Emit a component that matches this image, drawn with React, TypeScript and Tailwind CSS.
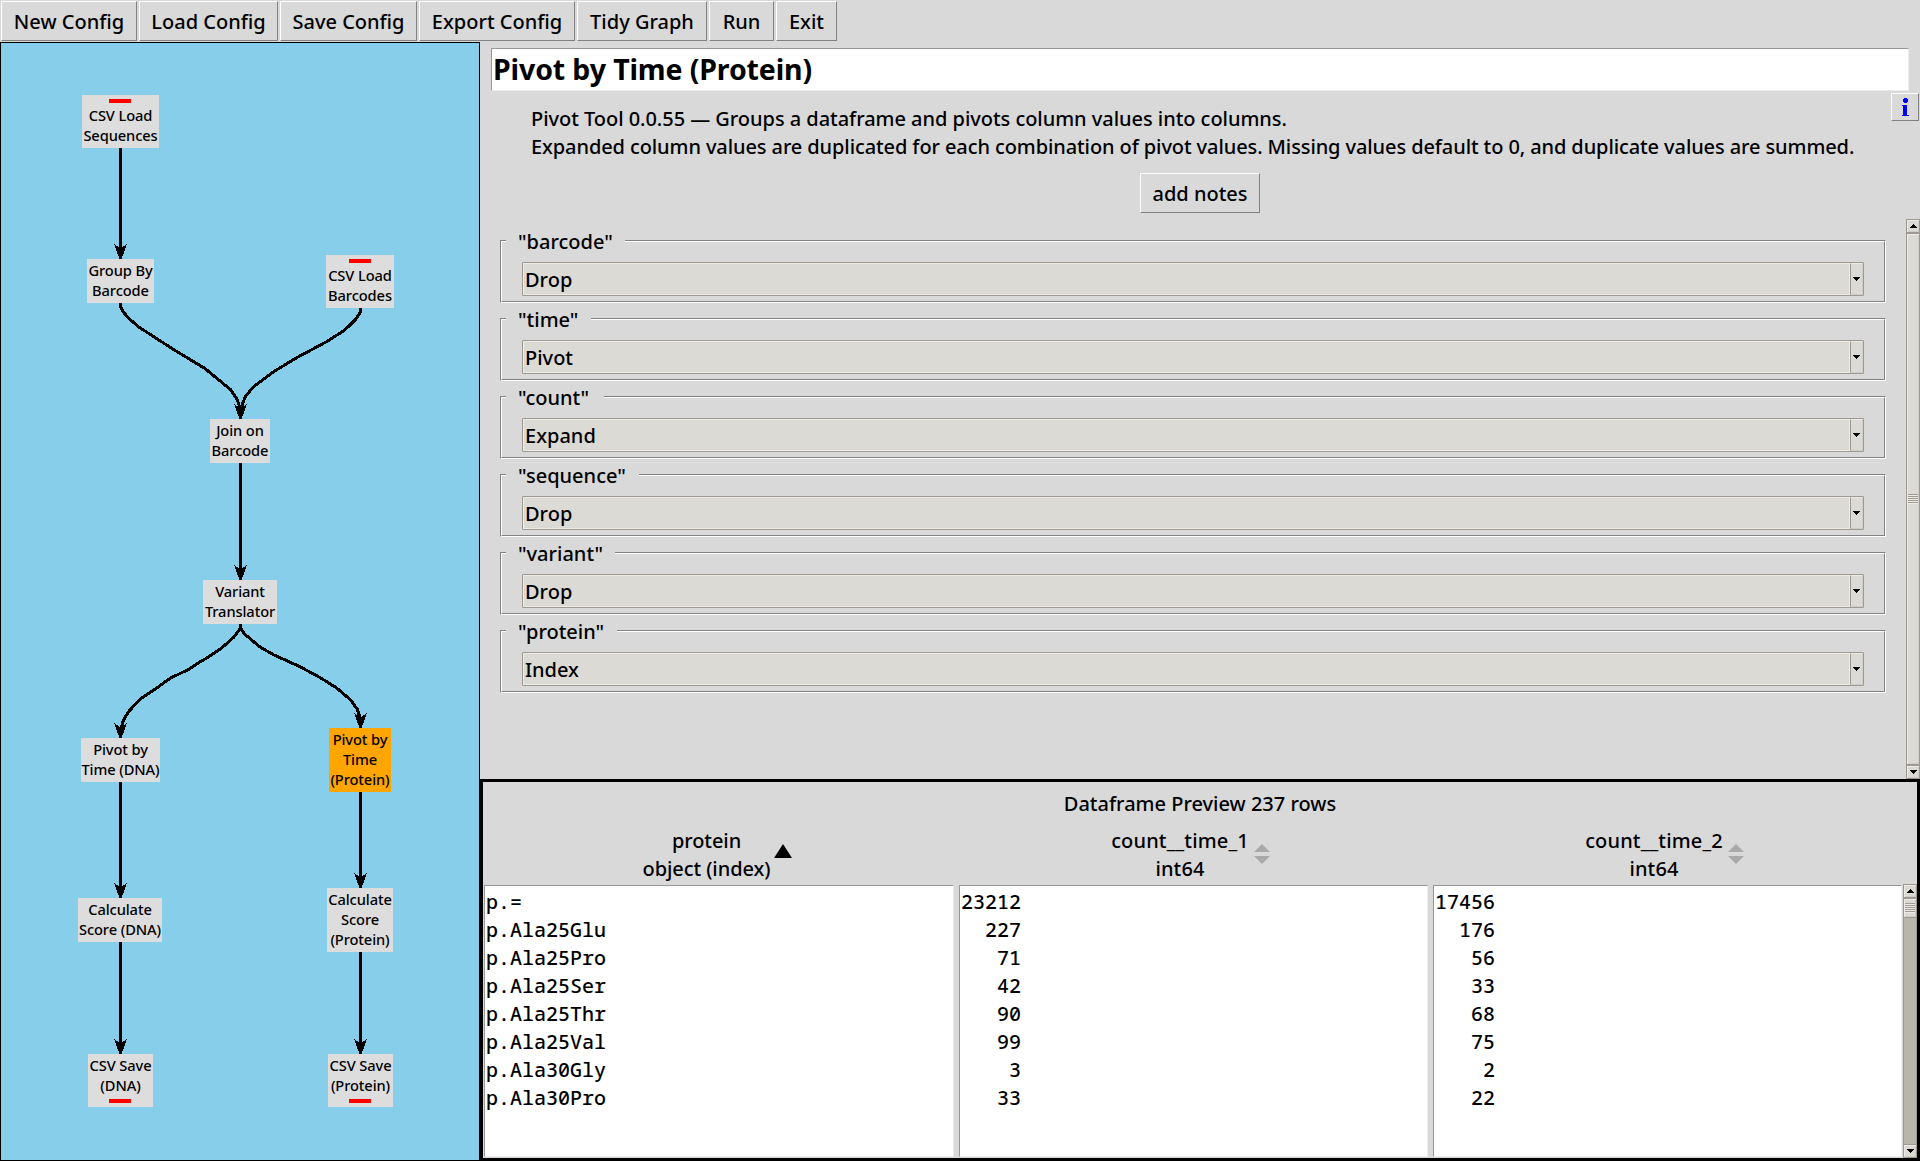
import type { ReactNode } from "react";

const TOOLBAR: { label: string; width: string }[] = [
  { label: "New Config", width: "w-[136px]" },
  { label: "Load Config", width: "w-[139px]" },
  { label: "Save Config", width: "w-[137px]" },
  { label: "Export Config", width: "w-[156px]" },
  { label: "Tidy Graph", width: "w-[130px]" },
  { label: "Run", width: "w-[65px]" },
  { label: "Exit", width: "w-[61px]" },
];

type GraphNode = {
  x: number;
  y: number;
  w: number;
  lines: string[];
  bar?: "top" | "bottom";
  selected?: boolean;
};

const NODES: GraphNode[] = [
  { x: 82, y: 95, w: 77, lines: ["CSV Load", "Sequences"], bar: "top" },
  { x: 87, y: 259, w: 67, lines: ["Group By", "Barcode"] },
  { x: 326, y: 255, w: 68, lines: ["CSV Load", "Barcodes"], bar: "top" },
  { x: 210, y: 419, w: 60, lines: ["Join on", "Barcode"] },
  { x: 203, y: 580, w: 74, lines: ["Variant", "Translator"] },
  { x: 81, y: 738, w: 79, lines: ["Pivot by", "Time (DNA)"] },
  { x: 329, y: 728, w: 62, lines: ["Pivot by", "Time", "(Protein)"], selected: true },
  { x: 78, y: 898, w: 84, lines: ["Calculate", "Score (DNA)"] },
  { x: 327, y: 888, w: 66, lines: ["Calculate", "Score", "(Protein)"] },
  { x: 88, y: 1054, w: 65, lines: ["CSV Save", "(DNA)"], bar: "bottom" },
  { x: 328, y: 1054, w: 65, lines: ["CSV Save", "(Protein)"], bar: "bottom" },
];

const EDGES: string[] = [
  "120.5,148 120.5,250",
  "120.5,303 120.5,307 124,313 130,319.5 139.5,327.5 153.5,336.5 173.5,349.5 205,368.5 216.8,378.3 231,390 237.5,400 240.5,410",
  "360.5,308 360.5,312 356,319 349,326 342.5,331.5 326.5,341.7 296.7,357.7 273.5,371.7 253.5,386.7 245,397 240.5,410",
  "240.5,463 240.5,571",
  "240.5,624 240.5,628 234,637 221.7,648 206.7,658 198.5,662.7 190,668.7 170,678.3 160,685.7 140,699.3 128.5,711.7 123.5,720 120.5,730",
  "240.5,624 240.5,628 244.5,634 260,647 273.5,654.7 300,666.7 320,677.5 336.7,688 350.7,700 357.3,709.3 360.5,719",
  "120.5,782 120.5,890",
  "360.5,792 360.5,880",
  "120.5,942 120.5,1046",
  "360.5,952 360.5,1046",
];

const ARROWS: [number, number][] = [
  [120.5, 259],
  [240.5, 419],
  [240.5, 580],
  [120.5, 738],
  [360.5, 728],
  [120.5, 898],
  [360.5, 888],
  [120.5, 1054],
  [360.5, 1054],
];

const FIELDS = [
  { name: '"barcode"', value: "Drop", width: "w-[119px]" },
  { name: '"time"', value: "Pivot", width: "w-[85px]" },
  { name: '"count"', value: "Expand", width: "w-[98px]" },
  { name: '"sequence"', value: "Drop", width: "w-[133px]" },
  { name: '"variant"', value: "Drop", width: "w-[109px]" },
  { name: '"protein"', value: "Index", width: "w-[111px]" },
];

const PROTEINS = ["p.=", "p.Ala25Glu", "p.Ala25Pro", "p.Ala25Ser", "p.Ala25Thr", "p.Ala25Val", "p.Ala30Gly", "p.Ala30Pro"];
const TIME_1 = ["23212", "227", "71", "42", "90", "99", "3", "33"];
const TIME_2 = ["17456", "176", "56", "33", "68", "75", "2", "22"];

function Button({ children, className }: { children: ReactNode; className: string }) {
  return (
    <button
      className={`flex h-10 shrink-0 items-center justify-center border border-t-white border-l-white border-r-[#828282] border-b-[#828282] bg-[#d9d9d9] pt-0.5 whitespace-nowrap ${className}`}
    >
      {children}
    </button>
  );
}

function Graph() {
  return (
    <div className="relative w-[480px] shrink-0 overflow-hidden border border-black bg-[#87ceeb]">
      <svg className="absolute top-0 left-0" width="478" height="1117" viewBox="1 43 478 1117" shapeRendering="crispEdges">
        {EDGES.map((points) => (
          <polyline key={points} points={points} fill="none" stroke="#000" strokeWidth="3" strokeLinejoin="round" />
        ))}
        {ARROWS.map(([x, y]) => (
          <polygon
            key={`${x}-${y}`}
            points={`${x},${y} ${x - 1},${y} ${x - 6.5},${y - 15} ${x - 1.5},${y - 11.5} ${x + 1.5},${y - 11.5} ${x + 6.5},${y - 15} ${x + 1},${y}`}
            fill="#000"
          />
        ))}
      </svg>
      {NODES.map((n) => (
        <div
          key={`${n.x}-${n.y}`}
          className={`absolute flex flex-col items-center text-[14.67px] leading-5 tracking-[-0.1px] whitespace-nowrap ${n.selected ? "bg-[#ffa500]" : "bg-[#dddddd]"}`}
          style={{ left: n.x - 1, top: n.y - 43, width: n.w, height: n.lines.length * 20 + (n.bar ? 13 : 4) }}
        >
          {n.bar === "top" && (
            <div className="mt-1 mb-px h-1 w-[22px] shrink-0 bg-[#ff0000]" style={{ marginRight: n.w % 2 }} />
          )}
          <div className="pt-px">
            {n.lines.map((l) => (
              <div key={l} className="flex justify-center">
                {l}
              </div>
            ))}
          </div>
          {n.bar === "bottom" && (
            <div className="mt-1 h-1 w-[22px] shrink-0 bg-[#ff0000]" style={{ marginRight: n.w % 2 }} />
          )}
        </div>
      ))}
    </div>
  );
}

function Field({ name, value, width }: { name: string; value: string; width: string }) {
  return (
    <div className="relative h-[63px] border border-[#828282] border-r-white border-b-white">
      <div className="h-[61px] border border-t-white border-l-white border-r-[#828282] border-b-[#828282] pt-5 pr-5 pl-5">
        <div className="flex h-[34px] rounded-[1px] border border-[#9e9a91] bg-[#dcdad5]">
          <div className="flex flex-1 items-start border border-[#eeebe7] pt-0.5 pl-px leading-7">{value}</div>
          <div className="flex w-[13px] items-center justify-center border border-t-[#eeebe7] border-r-[#cfcdc8] border-b-[#cfcdc8] border-l-[#9e9a91]">
            <svg width="7" height="4" viewBox="0 0 7 4" shapeRendering="crispEdges">
              <path d="M0 0h7v1h-1v1h-1v1h-1v1h-1v-1h-1v-1h-1v-1h-1z" />
            </svg>
          </div>
        </div>
      </div>
      <span className={`absolute -top-[13px] left-[5px] bg-[#d9d9d9] pl-3 leading-7 whitespace-nowrap ${width}`}>{name}</span>
    </div>
  );
}

function ScrollArrow({ up }: { up?: boolean }) {
  return (
    <div className="flex h-[14px] w-full shrink-0 items-center justify-center border border-[#9e9a91] bg-[#dcdad5] shadow-[inset_1px_1px_#eeebe7,inset_-1px_-1px_#cfcdc8]">
      <svg width="7" height="4" viewBox="0 0 7 4" shapeRendering="crispEdges" className={up ? "rotate-180" : ""}>
        <path d="M0 0h7v1h-1v1h-1v1h-1v1h-1v-1h-1v-1h-1v-1h-1z" />
      </svg>
    </div>
  );
}

function Scrollbar({ className, thumb }: { className: string; thumb: string }) {
  return (
    <div className={`flex w-[14px] shrink-0 flex-col bg-[#bab5ab] ${className}`}>
      <ScrollArrow up />
      <div className={`flex flex-col items-center justify-center border border-[#9e9a91] bg-[#dcdad5] shadow-[inset_1px_1px_#eeebe7,inset_-1px_-1px_#cfcdc8] ${thumb}`}>
        {[0, 1, 2, 3, 4].map((i) => (
          <div key={i} className="h-0.5 w-[10px] border-t border-[#9e9a91] bg-[#eeebe7]" />
        ))}
      </div>
      <div className="flex-1 border-x border-[#9e9a91]" />
      <ScrollArrow />
    </div>
  );
}

function SortIcon() {
  return (
    <svg className="mt-[17px] ml-[5px]" width="16" height="20" viewBox="0 0 16 20" fill="#a9a9a9">
      <path d="M8 0l8 8H0zM8 20l8-8H0z" />
    </svg>
  );
}

function Column({ title, type, icon, rows, className, headClass, labelClass, numeric }: {
  title: string;
  type: string;
  icon: ReactNode;
  rows: string[];
  className: string;
  headClass: string;
  labelClass: string;
  numeric?: boolean;
}) {
  return (
    <div className={`flex shrink-0 flex-col ${className}`}>
      <div className={`flex h-[58px] ${headClass}`}>
        <div className={`flex flex-col items-center leading-7 whitespace-nowrap ${labelClass}`}>
          <div>{title}</div>
          <div>{type}</div>
        </div>
        {icon}
      </div>
      <div className="h-[272px] border border-t-[#979797] border-r-[#ececec] border-b-[#ececec] border-l-[#979797] bg-white pt-[2px] pl-px font-['Noto_Sans_Mono','DejaVu_Sans_Mono',monospace] text-[20px] leading-7">
        <div className={numeric ? "w-[60px] text-right" : ""}>
          {rows.map((r) => (
            <div key={r}>{r}</div>
          ))}
        </div>
      </div>
    </div>
  );
}

export default function App() {
  return (
    <div className="flex h-[1161px] w-[1920px] flex-col overflow-hidden bg-[#d9d9d9] font-['Noto_Sans',sans-serif] text-[20px] leading-7 font-medium text-black">
      <div className="flex h-[42px] shrink-0 gap-0.5 pt-px pl-px">
        {TOOLBAR.map((b) => (
          <Button key={b.label} className={b.width}>
            {b.label}
          </Button>
        ))}
      </div>

      <div className="flex min-h-0 flex-1">
        <Graph />

        <div className="flex w-[1440px] flex-col">
          <div className="mt-1.5 ml-[11px] flex h-[43px] w-[1418px] shrink-0 items-center border border-t-[#979797] border-r-[#ececec] border-b-[#ececec] border-l-[#979797] bg-white pl-px text-[28.5px] leading-[41px] font-bold tracking-[-0.12px] whitespace-nowrap">
            Pivot by Time (Protein)
          </div>

          <div className="flex h-[128px] shrink-0 justify-between">
            <div className="flex w-[1411px] flex-col">
              <div className="mt-[14px] ml-[51px] whitespace-nowrap">
                <p className="tracking-[-0.04px]">Pivot Tool 0.0.55 — Groups a dataframe and pivots column values into columns.</p>
                <p className="tracking-[-0.1px]">Expanded column values are duplicated for each combination of pivot values. Missing values default to 0, and duplicate values are summed.</p>
              </div>
              <div className="mt-3 ml-[660px] flex">
                <Button className="w-[120px]">add notes</Button>
              </div>
            </div>
            <div className="mt-0.5 mr-px flex size-7 items-center justify-center border border-t-white border-l-white border-r-[#828282] border-b-[#828282] pl-px">
              <svg width="7" height="18" viewBox="0 0 7 18" fill="#0000ff" shapeRendering="crispEdges">
                <path d="M2 0h3v1h1v3h-1v1h-3v-1h-1v-3h1zM0 7h5v10h2v1H0v-1h1V8H0z" />
              </svg>
            </div>
          </div>

          <div className="flex h-[560px] shrink-0">
            <div className="flex w-[1426px] flex-col gap-[15px] pt-[21px] pr-5 pl-5">
              {FIELDS.map((f) => (
                <Field key={f.name} {...f} />
              ))}
            </div>
            <Scrollbar className="h-[560px]" thumb="h-[532px]" />
          </div>

          <div className="flex h-[382px] shrink-0 flex-col border-[3px] border-black">
            <div className="mt-2 h-7 text-center">Dataframe Preview 237 rows</div>
            <div className="mt-[9px] flex pl-px">
              <Column
                className="w-[470px]"
                headClass="pl-[159px]"
                labelClass="w-[127px] tracking-[-0.08px]"
                title="protein"
                type="object (index)"
                rows={PROTEINS}
                icon={
                  <svg className="mt-[17px] ml-1" width="18" height="14" viewBox="0 0 18 14">
                    <path d="M9 0l9 14H0z" />
                  </svg>
                }
              />
              <Column
                className="ml-[5px] w-[469px]"
                headClass="pl-[152px]"
                labelClass="w-[138px] tracking-[0.15px]"
                title="count__time_1"
                type="int64"
                rows={TIME_1}
                numeric
                icon={<SortIcon />}
              />
              <Column
                className="ml-[5px] w-[469px]"
                headClass="pl-[152px]"
                labelClass="w-[138px] tracking-[0.15px]"
                title="count__time_2"
                type="int64"
                rows={TIME_2}
                numeric
                icon={<SortIcon />}
              />
              <Scrollbar className="mt-[57px] ml-px h-[274px]" thumb="h-5" />
            </div>
          </div>
        </div>
      </div>
    </div>
  );
}
